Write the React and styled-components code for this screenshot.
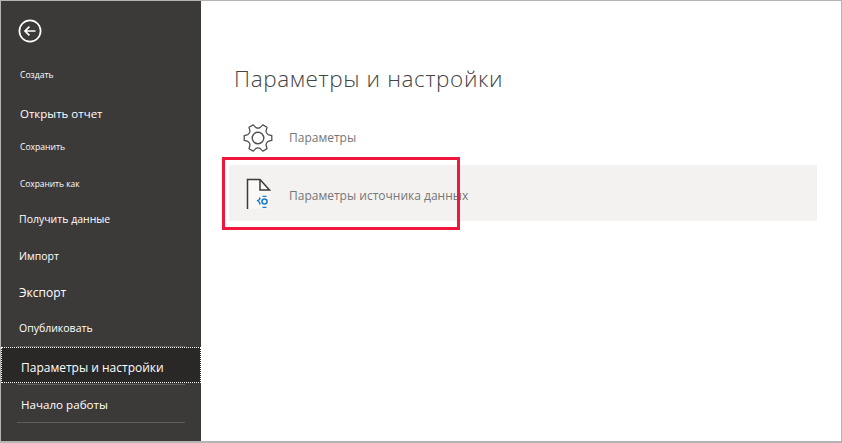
import React from "react";
import styled, { createGlobalStyle } from "styled-components";

const GlobalStyle = createGlobalStyle`
  html, body {
    margin: 0;
    padding: 0;
    background: #fff;
  }
  body {
    font-family: "Open Sans", "Noto Sans", sans-serif;
  }
`;

const menu = [
  { label: "Создать", height: 38, size: 8.6, left: 19 },
  { label: "Открыть отчет", height: 38, size: 11.5, left: 19, lift: -1 },
  { label: "Сохранить", height: 33, size: 8.6, left: 19, lift: 3 },
  { label: "Сохранить как", height: 38, size: 8.4, left: 19 },
  { label: "Получить данные", height: 35, size: 10.5, left: 18, lift: 2 },
  { label: "Импорт", height: 36, size: 10.5, left: 18 },
  { label: "Экспорт", height: 37, size: 12, left: 18 },
  { label: "Опубликовать", height: 35, size: 10.5, left: 18, lift: 1 },
];

// six rounded teeth, notches curve inward between them
const gearPath = (() => {
  const pt = (r, deg) => {
    const a = (deg * Math.PI) / 180;
    return `${(16 + r * Math.cos(a)).toFixed(2)} ${(16 + r * Math.sin(a)).toFixed(2)}`;
  };
  let d = "";
  for (let i = 0; i < 6; i++) {
    const a = i * 60;
    d += `${i === 0 ? "M" : "L"}${pt(10.6, a - 19)} L${pt(14, a - 10)} L${pt(14, a + 10)} L${pt(10.6, a + 19)} `;
    d += `A4.5 4.5 0 0 0 ${pt(10.6, a + 41)} `;
  }
  return d + "Z";
})();

export default function App() {
  return (
    <>
      <GlobalStyle />
      <Frame>
        <Sidebar>
          <BackButton aria-label="Назад">
            <svg width="26" height="26" viewBox="0 0 26 26" fill="none">
              <circle cx="12" cy="12" r="10.6" stroke="#fff" strokeWidth="1.7" />
              <path d="M17.5 12H7.2M11.4 7.6L7 12l4.4 4.4" stroke="#fff" strokeWidth="1.7" />
            </svg>
          </BackButton>
          <MenuList>
            {menu.map((item) => (
              <MenuItem
                key={item.label}
                $height={item.height}
                $size={item.size}
                $left={item.left}
                $lift={item.lift || 0}
              >
                {item.label}
              </MenuItem>
            ))}
            <Divider />
            <SelectedItem>Параметры и настройки</SelectedItem>
            <Divider $gap />
            <MenuItem $height={37} $size={11.6} $left={20} $lift={-2}>
              Начало работы
            </MenuItem>
            <Divider />
          </MenuList>
        </Sidebar>
        <Content>
          <Title>Параметры и настройки</Title>
          <OptionRow>
            <OptionIcon>
              <svg width="32" height="32" viewBox="0 0 32 32" fill="none">
                <path d={gearPath} stroke="#4f4f4f" strokeWidth="1.3" strokeLinejoin="round" />
                <circle cx="16" cy="16" r="5.8" stroke="#4f4f4f" strokeWidth="1.4" />
              </svg>
            </OptionIcon>
            <OptionLabel>Параметры</OptionLabel>
          </OptionRow>
          <HighlightRow>
            <OptionIcon>
              <svg width="30" height="36" viewBox="0 0 30 36" fill="none">
                <path d="M5.5 4.5h13l9 10v19h-22z" fill="#faf9f8" />
                <path d="M5.5 34V4.500h12.500l9.500 10.500H18V5" stroke="#3b3a39" strokeWidth="1.5" />
                <circle cx="22.500" cy="26.500" r="2.500" stroke="#1f7fc4" strokeWidth="1.6" />
                <path d="M18 22.500l-.5 2-1.800 1.200 1.800 1.600.5 2.200" stroke="#1f7fc4" strokeWidth="1.5" />
                <path d="M20.500 21.300h4M20.500 32.300h4" stroke="#1f7fc4" strokeWidth="1.3" />
              </svg>
            </OptionIcon>
            <OptionLabel $drop>Параметры источника данных</OptionLabel>
          </HighlightRow>
          <RedBox />
        </Content>
      </Frame>
    </>
  );
}

const Frame = styled.div`
  width: 842px;
  height: 443px;
  box-sizing: border-box;
  border: 1px solid #b4b4b4;
  border-bottom-width: 2px;
  display: flex;
  background: #fff;
  overflow: hidden;
`;

const Sidebar = styled.nav`
  width: 200px;
  flex-shrink: 0;
  background: #3b3a39;
  display: flex;
  flex-direction: column;
`;

const BackButton = styled.div`
  height: 55px;
  padding: 18px 0 0 17px;
  box-sizing: border-box;
`;

const MenuList = styled.div`
  display: flex;
  flex-direction: column;
`;

const MenuItem = styled.div`
  height: ${({ $height }) => $height}px;
  padding-left: ${({ $left }) => $left}px;
  font-size: ${({ $size }) => $size}px;
  line-height: ${({ $height, $lift }) => $height - ($lift || 0)}px;
  color: #fff;
  white-space: nowrap;
`;

const SelectedItem = styled.div`
  height: 36px;
  box-sizing: border-box;
  padding: 2px 0 0 19px;
  font-size: 12px;
  line-height: 36px;
  color: #fff;
  background: #292827;
  border: 1px dotted #fff;
  white-space: nowrap;
`;

const Divider = styled.div`
  height: 1px;
  margin: ${({ $gap }) => ($gap ? "1px" : "0")} 16px 0;
  background: #605e5c;
`;

const Content = styled.main`
  position: relative;
  flex: 1;
  padding: 63px 24px 0 28px;
`;

const Title = styled.h1`
  margin: 0 0 21px 5px;
  font-size: 22.5px;
  line-height: 30px;
  font-weight: 300;
  letter-spacing: 0.62px;
  color: #444;
  white-space: nowrap;
`;

const OptionRow = styled.div`
  display: flex;
  align-items: center;
  height: 45px;
  margin-bottom: 5px;
  padding-left: 13px;
`;

const HighlightRow = styled(OptionRow)`
  height: 56px;
  margin-bottom: 0;
  background: #f3f2f1;
`;

const OptionIcon = styled.div`
  width: 47px;
  display: flex;
  align-items: center;
`;

const OptionLabel = styled.span`
  font-size: 12px;
  color: #767676;
  white-space: nowrap;
  padding-top: ${({ $drop }) => ($drop ? "4px" : "0")};
`;

const RedBox = styled.div`
  position: absolute;
  left: 21px;
  top: 156px;
  width: 238px;
  height: 73px;
  box-sizing: border-box;
  border: 3px solid #f0173c;
`;
